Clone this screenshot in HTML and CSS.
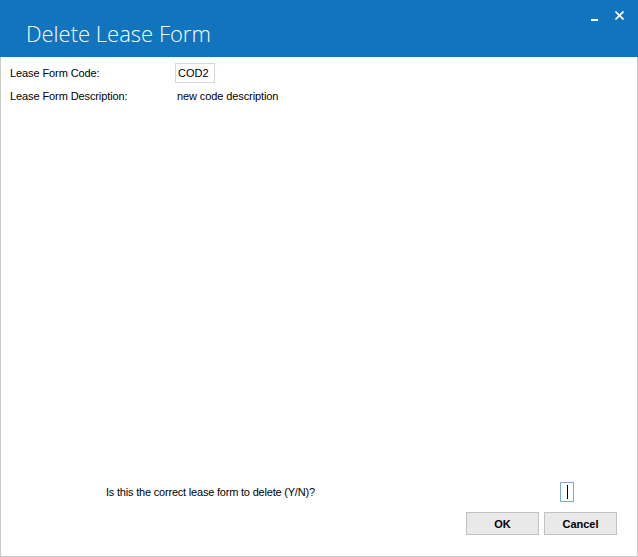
FILE: index.html
```html
<!DOCTYPE html>
<html lang="en">
<head>
  <meta charset="UTF-8" />
  <title>Delete Lease Form</title>
  <link rel="stylesheet" href="styles.css">
</head>
<body>

<div class="window">
  <div class="titlebar">
    <h1>Delete Lease Form</h1>
    <div class="controls">
      <span class="min"></span>
      <svg class="close" width="9" height="9" viewBox="0 0 9 9">
        <path d="M0.5 0.5 L8.5 8.5 M8.5 0.5 L0.5 8.5" stroke="#fff" stroke-width="1.6" />
      </svg>
    </div>
  </div>

  <div class="content">
    <div class="row">
      <label>Lease Form Code:</label>
      <input class="code" type="text" value="COD2" />
    </div>
    <div class="row">
      <label>Lease Form Description:</label>
      <span class="value">new code description</span>
    </div>
  </div>

  <div class="footer">
    <div class="confirm">
      <span class="question">Is this the correct lease form to delete (Y/N)?</span>
      <span class="yn"><span class="caret"></span></span>
    </div>
    <div class="buttons">
      <button class="btn">OK</button>
      <button class="btn">Cancel</button>
    </div>
  </div>
</div>

</body>
</html>
```

FILE: styles.css
```css
* { box-sizing: border-box; margin: 0; padding: 0; }
body { font-family: "Liberation Sans", Arial, sans-serif; font-size: 11px; background: #fff; }
.window {
  width: 638px;
  height: 557px;
  display: flex;
  flex-direction: column;
  border: 1px solid #c9c9c9;
  border-top: none;
  background: #fff;
}
.titlebar {
  height: 57px;
  background: #1174bc;
  margin: 0 -1px;
  display: flex;
  justify-content: space-between;
  color: #fff;
}
.titlebar h1 {
  font-family: "Open Sans", sans-serif;
  font-weight: 300;
  font-size: 22px;
  padding: 18px 0 0 26px;
}
.controls {
  display: flex;
  align-items: flex-start;
  gap: 17px;
  padding: 11px 14px 0 0;
}
.min {
  width: 7px;
  height: 2px;
  background: #fff;
  margin-top: 8px;
}
.content {
  flex: 1;
  padding: 5px 0 0 9px;
}
.row {
  display: flex;
  align-items: center;
  height: 22px;
  margin-bottom: 1px;
}
.row label {
  width: 165px;
  color: #000;
  letter-spacing: -0.1px;
}
.code {
  width: 40px;
  height: 20px;
  border: 1px solid #d8d8d8;
  font-family: "Liberation Sans", Arial, sans-serif;
  font-size: 11px;
  padding: 0 0 0 2px;
  color: #000;
}
.value {
  padding-left: 2px;
  letter-spacing: -0.1px;
}
.footer {
  padding: 0 20px 21px 0;
}
.confirm {
  display: flex;
  align-items: center;
  justify-content: space-between;
  padding-left: 105px;
  margin-bottom: 10px;
}
.question {
  letter-spacing: -0.2px;
}
.yn {
  width: 14px;
  height: 20px;
  border: 1px solid #7fa7cf;
  display: flex;
  align-items: center;
  justify-content: center;
  margin-right: 43px;
}
.caret {
  width: 1px;
  height: 14px;
  background: #000;
}
.buttons {
  display: flex;
  justify-content: flex-end;
  gap: 5px;
}
.btn {
  width: 73px;
  height: 23px;
  background: #e9e9e9;
  border: 1px solid #c2c2c2;
  font-family: "Liberation Sans", Arial, sans-serif;
  font-size: 11px;
  font-weight: bold;
  color: #000;
}
```
